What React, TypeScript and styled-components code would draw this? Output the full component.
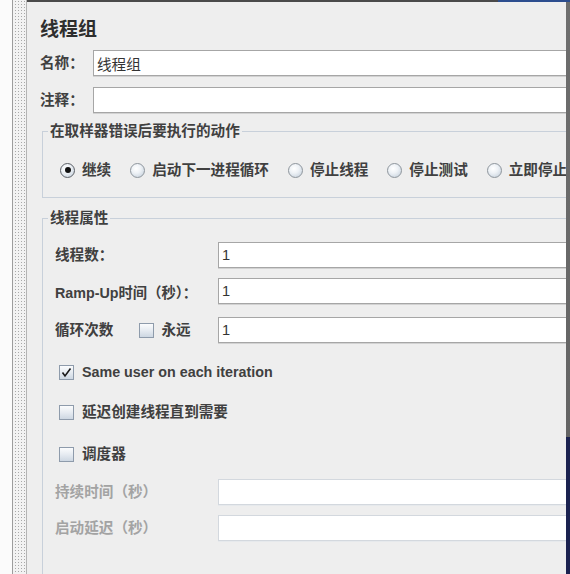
import styled, { createGlobalStyle } from 'styled-components';

const GlobalStyle = createGlobalStyle`
  html, body {
    margin: 0;
    padding: 0;
    background: #ffffff;
    overflow: hidden;
  }
  * {
    box-sizing: border-box;
  }
`;

const FONT = `"Liberation Sans", "Noto Sans CJK SC", sans-serif`;

const Screen = styled.div`
  display: flex;
  width: 570px;
  height: 574px;
  font-family: ${FONT};
  color: #333333;
`;

const LeftBlank = styled.div`
  width: 12px;
  background: #fbfbfb;
`;

const Divider = styled.div`
  width: 15px;
  border-left: 1px solid #9c9c9c;
  border-right: 1px solid #b4b4b4;
  background-color: #f2f2f2;
  background-image: radial-gradient(circle, #a8a8a8 0.7px, transparent 1px);
  background-size: 3px 3px;
  background-position: 1px 0;
`;

const Main = styled.div`
  flex: 1;
  display: flex;
  flex-direction: column;
  background: #eeeeee;
  overflow: hidden;
`;

const TopBar = styled.div`
  height: 2px;
  flex-shrink: 0;
  background: linear-gradient(to right, #4a4a4a 0, #4a4a4a 471px, #2c4d8e 471px);
`;

const Content = styled.div`
  width: 660px;
  padding: 13px 0 0 13px;
`;

const Title = styled.div`
  font-family: "Noto Sans CJK SC", sans-serif;
  font-size: 19px;
  font-weight: 700;
  line-height: 26px;
  color: #2e2e2e;
`;

const TopRow = styled.div<{ $mt: number }>`
  display: grid;
  grid-template-columns: 53px 1fr;
  align-items: center;
  margin-top: ${(p) => p.$mt}px;
`;

const Label = styled.span<{ $disabled?: boolean }>`
  font-size: 14.6px;
  font-weight: 700;
  line-height: 20px;
  white-space: nowrap;
  color: ${(p) => (p.$disabled ? '#a3a3a3' : '#404040')};
`;

const Field = styled.div<{ $disabled?: boolean }>`
  height: 26px;
  display: flex;
  align-items: center;
  padding-left: 3px;
  background: #ffffff;
  border: 1px solid ${(p) => (p.$disabled ? '#d3d8de' : '#a6a6a6')};
  box-shadow: 0 1px 0 ${(p) => (p.$disabled ? '#e6e9ec' : '#d2d2d2')};
  font-size: 14.6px;
  color: #333333;
  white-space: nowrap;
`;

const Group = styled.fieldset<{ $mt: number }>`
  margin: ${(p) => p.$mt}px 0 0 2px;
  padding: 0 0 0 12px;
  border: 1px solid #c8d0da;
  border-right: none;
  min-width: 0;
`;

const Legend = styled.legend`
  margin-left: -7px;
  padding: 0 2px;
  font-size: 14.6px;
  font-weight: 700;
  line-height: 20px;
  color: #404040;
`;

const RadioRow = styled.div`
  display: flex;
  align-items: center;
  margin: 19px 0 17px 5px;
  height: 20px;
`;

const RadioItem = styled.div`
  display: flex;
  align-items: center;
  gap: 7px;
  margin-right: 19px;
  white-space: nowrap;
`;

const RadioCircle = styled.span<{ $checked?: boolean }>`
  position: relative;
  width: 15px;
  height: 15px;
  border-radius: 50%;
  border: 1px solid ${(p) => (p.$checked ? '#5c6066' : '#8e959c')};
  background: radial-gradient(circle at 40% 35%, #ffffff 0, #eef2f6 40%, #bfcbd8 100%);
  flex-shrink: 0;

  &::after {
    content: '';
    display: ${(p) => (p.$checked ? 'block' : 'none')};
    position: absolute;
    left: 3.5px;
    top: 3.5px;
    width: 6px;
    height: 6px;
    border-radius: 50%;
    background: #111111;
  }
`;

const PropRow = styled.div<{ $mt: number }>`
  display: grid;
  grid-template-columns: 163px 1fr;
  align-items: center;
  margin-top: ${(p) => p.$mt}px;
`;

const LabelCell = styled.div`
  display: flex;
  align-items: center;
`;

const CheckRow = styled.div<{ $mt: number }>`
  display: flex;
  align-items: center;
  gap: 8px;
  height: 20px;
  margin: ${(p) => p.$mt}px 0 0 4px;
`;

const InlineCheck = styled.div`
  display: flex;
  align-items: center;
  gap: 7px;
  margin-left: 26px;
`;

const Box = styled.span`
  width: 15px;
  height: 15px;
  display: flex;
  align-items: center;
  justify-content: center;
  border: 1px solid #8e9bab;
  background: linear-gradient(to bottom, #fbfcfd 0, #e6ebf1 50%, #cdd7e2 100%);
  flex-shrink: 0;
`;

const LatinBold = styled.span`
  font-family: ${FONT};
  font-size: 14.3px;
  font-weight: 700;
  color: #404040;
  white-space: nowrap;
`;

const Spacer = styled.div`
  height: 40px;
`;

const RightEdge = styled.div`
  width: 4px;
  flex-shrink: 0;
  background: linear-gradient(to bottom, #2c4d8e 0, #2c4d8e 2px, #6e6e6e 2px, #646464 437px, #1b2250 437px);
`;

const Check = () => (
  <svg width="11" height="11" viewBox="0 0 11 11">
    <path d="M1.5 5.5 L4 9 L9.5 1.5" fill="none" stroke="#1a1a1a" strokeWidth="1.6" />
  </svg>
);

const Radio = ({ label, checked }: { label: string; checked?: boolean }) => (
  <RadioItem>
    <RadioCircle $checked={checked} />
    <Label>{label}</Label>
  </RadioItem>
);

const App = () => {
  return (
    <>
      <GlobalStyle />
      <Screen>
        <LeftBlank />
        <Divider />
        <Main>
          <TopBar />
          <Content>
            <Title>线程组</Title>
            <TopRow $mt={9}>
              <Label>名称：</Label>
              <Field>线程组</Field>
            </TopRow>
            <TopRow $mt={11}>
              <Label>注释：</Label>
              <Field />
            </TopRow>

            <Group $mt={8}>
              <Legend>在取样器错误后要执行的动作</Legend>
              <RadioRow>
                <Radio label="继续" checked />
                <Radio label="启动下一进程循环" />
                <Radio label="停止线程" />
                <Radio label="停止测试" />
                <Radio label="立即停止测试" />
              </RadioRow>
            </Group>

            <Group $mt={10}>
              <Legend>线程属性</Legend>
              <PropRow $mt={14}>
                <Label>线程数：</Label>
                <Field>1</Field>
              </PropRow>
              <PropRow $mt={10}>
                <LatinBold>Ramp-Up时间（秒）：</LatinBold>
                <Field>1</Field>
              </PropRow>
              <PropRow $mt={13}>
                <LabelCell>
                  <Label>循环次数</Label>
                  <InlineCheck>
                    <Box />
                    <Label>永远</Label>
                  </InlineCheck>
                </LabelCell>
                <Field>1</Field>
              </PropRow>
              <CheckRow $mt={19}>
                <Box>
                  <Check />
                </Box>
                <LatinBold>Same user on each iteration</LatinBold>
              </CheckRow>
              <CheckRow $mt={20}>
                <Box />
                <Label>延迟创建线程直到需要</Label>
              </CheckRow>
              <CheckRow $mt={22}>
                <Box />
                <Label>调度器</Label>
              </CheckRow>
              <PropRow $mt={15}>
                <Label $disabled>持续时间（秒）</Label>
                <Field $disabled />
              </PropRow>
              <PropRow $mt={10}>
                <Label $disabled>启动延迟（秒）</Label>
                <Field $disabled />
              </PropRow>
              <Spacer />
            </Group>
          </Content>
        </Main>
        <RightEdge />
      </Screen>
    </>
  );
};

export default App;
